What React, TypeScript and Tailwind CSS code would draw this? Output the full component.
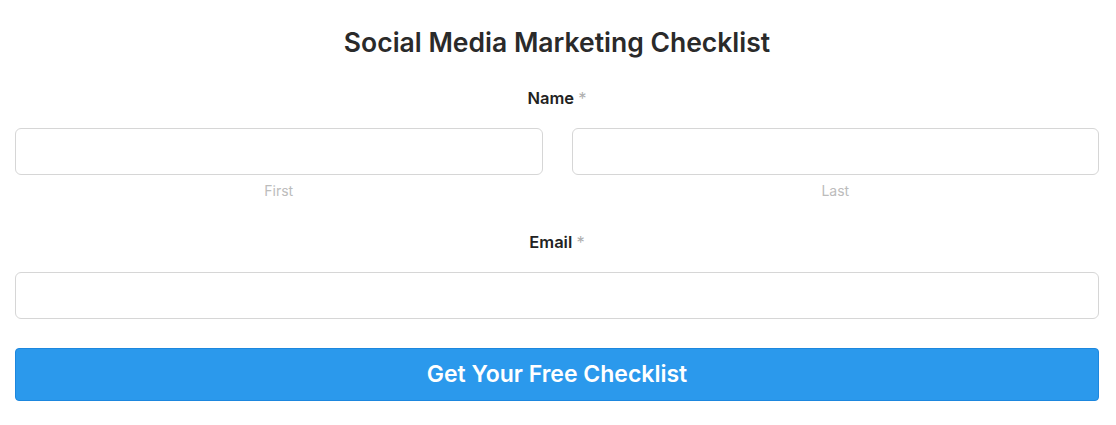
import React from 'react';

export default function App() {
  return (
    <main className="min-h-screen bg-white pl-[15px] pr-[17px] pt-[26px] font-['Inter',sans-serif] text-[#222]">
      <h1 className="text-center text-[26.5px] font-semibold leading-[32px] text-[#2a2a2a]">
        Social Media Marketing Checklist
      </h1>

      {/* Name */}
      <div className="mt-[28px] text-center text-[16.5px] font-semibold leading-[24px]">
        Name <span className="font-normal text-[#b0b0b0]">*</span>
      </div>
      <div className="mt-[18px] grid grid-cols-2 gap-[29px]">
        <div className="flex flex-col">
          <input className="h-[47px] rounded-[6px] border border-[#d6d6d6] bg-white outline-none" />
          <span className="mt-[6px] text-center text-[14px] leading-[20px] text-[#bcbcbc]">First</span>
        </div>
        <div className="flex flex-col">
          <input className="h-[47px] rounded-[6px] border border-[#d6d6d6] bg-white outline-none" />
          <span className="mt-[6px] text-center text-[14px] leading-[20px] text-[#bcbcbc]">Last</span>
        </div>
      </div>

      {/* Email */}
      <div className="mt-[29px] text-center text-[16.5px] font-semibold leading-[24px]">
        Email <span className="font-normal text-[#b0b0b0]">*</span>
      </div>
      <input className="mt-[18px] block h-[47px] w-full rounded-[6px] border border-[#d6d6d6] bg-white outline-none" />

      <button className="mt-[29px] flex h-[53px] w-full items-center justify-center rounded-[4px] border border-[#1d87de] bg-[#2b99ec] text-[23px] font-semibold text-white">
        Get Your Free Checklist
      </button>
    </main>
  );
}
